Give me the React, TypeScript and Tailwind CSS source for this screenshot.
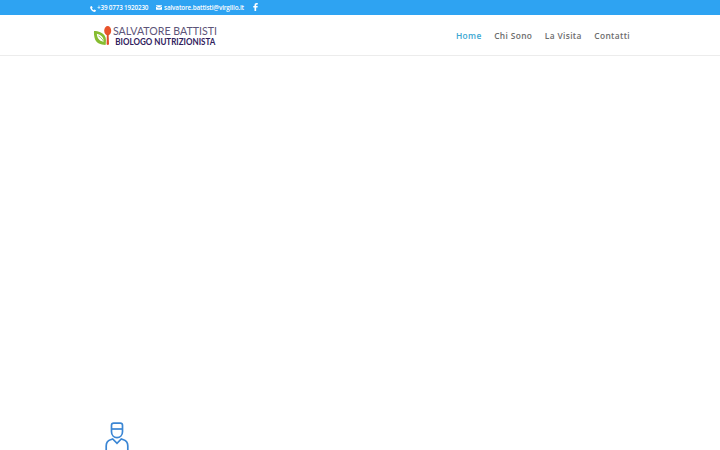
const links = ["Home", "Chi Sono", "La Visita", "Contatti"];

function Logo() {
  return (
    <svg viewBox="0 0 130 28" className="h-7 w-[130px] overflow-visible" role="img" aria-label="Salvatore Battisti">
      <path
        d="M1 10C5.5 10 9.8 11.7 11.8 14.8C13.4 17.4 13.1 20.6 12.5 24C7.4 23.7 3.5 22 2 18.2C1 15.4 .8 12.4 1 10Z"
        fill="#86bc30"
      />
      <path d="M3.8 12.8C8 14 10.3 15.6 10.9 20.9C7.2 20.2 4.2 18.1 3.8 12.8Z" fill="#fff" />
      <path d="M5.5 15C8 16.5 10.5 19 12.2 23.3" stroke="#86bc30" strokeWidth="0.8" fill="none" />
      <ellipse cx="14.7" cy="9.8" rx="3.5" ry="4.7" fill="#e8532b" />
      <path d="M13.9 13h1.7l.4 10.2q-1.2 1.6-2.4 0Z" fill="#e04c28" />
      <text
        x="20"
        y="14.2"
        textLength="104"
        lengthAdjust="spacingAndGlyphs"
        fontFamily="Lato, sans-serif"
        fontWeight="400"
        fontSize="11.6"
        fill="#5d5578"
      >
        SALVATORE BATTISTI
      </text>
      <text
        x="22.3"
        y="24"
        textLength="100"
        lengthAdjust="spacingAndGlyphs"
        fontFamily="Lato, sans-serif"
        fontWeight="700"
        fontSize="9"
        fill="#30205c"
      >
        BIOLOGO NUTRIZIONISTA
      </text>
    </svg>
  );
}

function TopBar() {
  return (
    <div className="h-[15px] shrink-0 bg-[#2ea3f2] text-white">
      <div className="mx-auto flex h-full w-[540px] items-center text-[6.3px] font-semibold leading-[10px]">
        <a href="#tel" className="flex w-[66px] items-center gap-px whitespace-nowrap tracking-[-0.15px]">
          <svg viewBox="0 0 12 12" className="mt-[2px] size-[6px] shrink-0" fill="currentColor">
            <path d="M1 1L3.5 0L5.3 3.5L3.8 5Q5 7.2 7.2 8.3L8.7 6.8L12 8.6L11 11.2Q9 12.5 6 10.8Q2.4 8.7 .8 5Q-.2 2.6 1 1Z" />
          </svg>
          <span>+39 0773 1920230</span>
        </a>
        <a href="#mail" className="flex w-[96.5px] items-center gap-[2px] whitespace-nowrap tracking-[-0.12px]">
          <svg viewBox="0 0 12 9" className="h-[5px] w-[6px] shrink-0" fill="currentColor">
            <path d="M0 0H12V1.2L6 5L0 1.2ZM0 2.7L6 6.5L12 2.7V9H0Z" />
          </svg>
          <span>salvatore.battisti@virgilio.it</span>
        </a>
        <a href="#facebook" aria-label="Facebook">
          <svg viewBox="0 0 10 16" className="mb-px h-[8px] w-[5px]" fill="currentColor">
            <path d="M3 16V9H.5V6H3V4Q3 0 7 0H9.5V3H7.8Q6.3 3 6.3 4.5V6H9.5L9 9H6.3V16Z" />
          </svg>
        </a>
      </div>
    </div>
  );
}

export default function App() {
  return (
    <div className="flex h-[450px] flex-col overflow-hidden bg-white font-['Open_Sans',sans-serif]">
      <TopBar />
      <header className="h-[41px] shrink-0 border-b border-[#ececec]">
        <div className="mx-auto flex h-10 w-[540px] items-center justify-between">
          <a href="#home" className="ml-[3px]">
            <Logo />
          </a>
          <nav className="flex gap-[12.6px] pt-px text-[8.4px] font-semibold leading-3 tracking-[0.35px]">
            {links.map((link, i) => (
              <a key={link} href="#menu" className={i === 0 ? "text-[#3ba7d2]" : "text-[#6c6c6c]"}>
                {link}
              </a>
            ))}
          </nav>
        </div>
      </header>
      <main className="flex flex-1 items-end pl-[105px]">
        <svg viewBox="0 0 24 29" className="h-[29px] w-6" fill="none" stroke="#3b86d4" strokeWidth="1.7">
          <path d="M6.5 4.3Q6.5 2.1 8.8 2.1H15.2Q17.5 2.1 17.5 4.3V10.8C17.5 14.3 15 16.6 12 16.6S6.5 14.3 6.5 10.8Z" />
          <path d="M6.5 8H17.5" />
          <path d="M1.2 29V25Q1.2 20.3 5.5 18.8L7.7 18L12 22.3L16.3 18L18.5 18.8Q22.8 20.3 22.8 25V29" />
        </svg>
      </main>
    </div>
  );
}
